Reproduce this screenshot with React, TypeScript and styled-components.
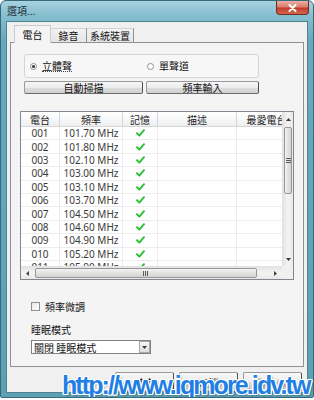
import React from 'react';
import styled, { createGlobalStyle } from 'styled-components';

const GlobalStyle = createGlobalStyle`
  html, body { margin: 0; padding: 0; background: #fff; }
  body { font-family: "Noto Sans", "Noto Sans CJK TC", sans-serif; }
`;

const cjk = `"Noto Sans CJK TC", "Noto Sans", sans-serif`;

const Window = styled.div`
  position: relative;
  width: 314px;
  height: 398px;
  box-sizing: border-box;
  display: flex;
  flex-direction: column;
  border: 1px solid #36697a;
  border-radius: 6px 6px 2px 2px;
  background: linear-gradient(180deg, #a7d2df 0px, #86bfd0 14px, #68a9bd 40px, #5d9fb3 100%);
  overflow: hidden;
`;

const TitleBar = styled.div`
  height: 20px;
  display: flex;
  align-items: flex-start;
  padding-left: 6px;
`;

const Title = styled.div`
  font-family: ${cjk};
  font-size: 10px;
  line-height: 19px;
  color: #1b2b33;
`;

const CloseButton = styled.div`
  margin-left: auto;
  margin-right: 4px;
  width: 33px;
  height: 14px;
  box-sizing: border-box;
  border: 1px solid #6e2b22;
  border-top: none;
  border-radius: 0 0 4px 4px;
  background: linear-gradient(180deg, #eab0a6 0%, #dc7d6e 45%, #c23d2b 55%, #d5664f 100%);
  display: flex;
  align-items: center;
  justify-content: center;
`;

const Client = styled.div`
  flex: 1;
  margin: 0 5px 4px;
  box-sizing: border-box;
  border: 1px solid #4f8394;
  background: #f0f0f0;
  padding: 3px 3px 0;
  display: flex;
  flex-direction: column;
  overflow: hidden;
`;

const TabStrip = styled.div`
  height: 17px;
  display: flex;
  align-items: flex-end;
  padding-left: 4px;
  position: relative;
  z-index: 1;
`;

const Tab = styled.div<{ $active?: boolean; $w: number }>`
  width: ${p => p.$w}px;
  height: ${p => (p.$active ? 18 : 14)}px;
  box-sizing: border-box;
  margin-bottom: ${p => (p.$active ? -1 : 0)}px;
  font-family: ${cjk};
  font-size: 10px;
  color: #111;
  display: flex;
  align-items: center;
  justify-content: center;
  background: ${p => (p.$active ? '#f4f4f4' : 'linear-gradient(180deg, #f2f2f2, #e6e6e6)')};
  border-left: 1px solid ${p => (p.$active ? '#c9cdd2' : '#8e9196')};
  border-right: 1px solid ${p => (p.$active ? '#c9cdd2' : '#8e9196')};
  border-top: 1px solid ${p => (p.$active ? '#c9cdd2' : '#d3d3d3')};
  & + & { border-left: none; }
`;

const TabPanel = styled.div`
  height: 326px;
  box-sizing: border-box;
  border: 1px solid #8e9196;
  background: #f4f4f4;
  padding: 11px 9px 0;
  display: flex;
  flex-direction: column;
`;

const GroupBox = styled.div`
  margin-left: 4px;
  width: 235px;
  height: 24px;
  box-sizing: border-box;
  border: 1px solid #d0d6da;
  border-radius: 3px;
  background: #f7f7f7;
  display: grid;
  grid-template-columns: 117px 1fr;
  align-items: center;
  padding-left: 5px;
`;

const RadioOption = styled.label`
  display: flex;
  align-items: center;
  gap: 5px;
  font-family: ${cjk};
  font-size: 10px;
  color: #111;
`;

const RadioCircle = styled.span<{ $checked?: boolean }>`
  width: 7px;
  height: 7px;
  box-sizing: border-box;
  border-radius: 50%;
  border: 1px solid #8f8f8f;
  background: #fff;
  display: flex;
  align-items: center;
  justify-content: center;
  &::after {
    content: '';
    width: 3px;
    height: 3px;
    border-radius: 50%;
    background: ${p => (p.$checked ? '#333' : 'transparent')};
  }
`;

const FocusText = styled.span<{ $focus?: boolean }>`
  border-bottom: 1px dotted ${p => (p.$focus ? '#444' : 'transparent')};
  line-height: 11px;
`;

const ButtonRow = styled.div`
  margin: 3px 0 0 4px;
  display: flex;
  gap: 3px;
`;

const PushButton = styled.div<{ $w: number; $h?: number; $disabled?: boolean }>`
  width: ${p => p.$w}px;
  height: ${p => p.$h ?? 13}px;
  box-sizing: border-box;
  border: 1px solid #9a9a9a;
  border-right-color: #4e4e4e;
  border-bottom-color: #6a6a6a;
  border-radius: 2px;
  background: linear-gradient(180deg, #f7f7f7 0%, #ececec 50%, #dddddd 51%, #d2d2d2 100%);
  font-family: ${cjk};
  font-size: 10px;
  color: ${p => (p.$disabled ? '#a0a0a0' : '#111')};
  display: flex;
  align-items: ${p => (p.$h ? 'flex-start' : 'center')};
  padding-top: ${p => (p.$h ? 2 : 0)}px;
  justify-content: center;
`;

const ListView = styled.div`
  margin-top: 17px;
  height: 169px;
  box-sizing: border-box;
  border: 1px solid #828790;
  background: #fff;
  display: grid;
  grid-template-columns: 1fr 11px;
  grid-template-rows: 1fr 13px;
`;

const ListBody = styled.div`
  overflow: hidden;
`;

const cols = [39, 63, 35, 79, 60];

const HeaderRow = styled.div`
  display: flex;
  height: 15px;
  box-sizing: border-box;
  border-bottom: 1px solid #d5d5d5;
  background: linear-gradient(180deg, #ffffff 0%, #f7f8f9 50%, #eceef0 100%);
`;

const HeaderCell = styled.div<{ $w: number }>`
  flex: 0 0 ${p => p.$w}px;
  box-sizing: border-box;
  border-right: 1px solid #d5d5d5;
  font-family: ${cjk};
  font-size: 10px;
  color: #222;
  display: flex;
  align-items: center;
  justify-content: center;
  white-space: nowrap;
  overflow: hidden;
`;

const Row = styled.div`
  display: flex;
  height: 13.4px;
  box-sizing: border-box;
  border-bottom: 1px solid #ececec;
`;

const Cell = styled.div<{ $w: number }>`
  flex: 0 0 ${p => p.$w}px;
  box-sizing: border-box;
  border-right: 1px solid #ececec;
  font-size: 10px;
  color: #3a3a3a;
  display: flex;
  align-items: center;
  justify-content: center;
  white-space: nowrap;
`;

const VScroll = styled.div`
  display: flex;
  flex-direction: column;
  background: linear-gradient(90deg, #e4e4e4, #f4f4f4 50%, #e8e8e8);
  border-left: 1px solid #e2e2e2;
`;

const HScroll = styled.div`
  display: flex;
  background: linear-gradient(180deg, #e4e4e4, #f4f4f4 50%, #e8e8e8);
  border-top: 1px solid #e2e2e2;
`;

const ArrowBox = styled.div<{ $v?: boolean }>`
  flex: 0 0 ${p => (p.$v ? 14 : 13)}px;
  display: flex;
  align-items: center;
  justify-content: center;
`;

const Thumb = styled.div<{ $v?: boolean; $len: number }>`
  ${p => (p.$v ? `height: ${p.$len}px; margin: 1px 1px 0;` : `width: ${p.$len}px; margin: 1px 0 1px 1px;`)}
  box-sizing: border-box;
  border: 1px solid #979797;
  border-radius: 2px;
  background: ${p =>
    p.$v
      ? 'linear-gradient(90deg, #f3f3f3, #e2e2e2 50%, #d4d4d4)'
      : 'linear-gradient(180deg, #f3f3f3, #e2e2e2 50%, #d4d4d4)'};
  display: flex;
  align-items: center;
  justify-content: center;
`;

const Spacer = styled.div`
  flex: 1;
`;

const Corner = styled.div`
  background: #f0f0f0;
`;

const CheckRow = styled.label`
  margin: 19px 0 0 11px;
  display: flex;
  align-items: center;
  gap: 5px;
  font-family: ${cjk};
  font-size: 10px;
  color: #111;
`;

const CheckBox = styled.span`
  width: 9px;
  height: 9px;
  box-sizing: border-box;
  border: 1px solid #8f8f8f;
  background: linear-gradient(135deg, #e8e8e8, #ffffff);
`;

const FieldLabel = styled.div`
  margin: 8px 0 0 11px;
  font-family: ${cjk};
  font-size: 10px;
  color: #111;
`;

const Select = styled.div`
  margin: 3px 0 0 11px;
  width: 120px;
  height: 14px;
  box-sizing: border-box;
  border: 1px solid #7e8287;
  background: #fff;
  display: flex;
  align-items: center;
  font-family: ${cjk};
  font-size: 10px;
  color: #111;
  padding-left: 2px;
`;

const DropButton = styled.div`
  margin-left: auto;
  width: 11px;
  height: 12px;
  box-sizing: border-box;
  border: 1px solid #a8a8a8;
  background: linear-gradient(180deg, #f5f5f5, #dedede);
  display: flex;
  align-items: center;
  justify-content: center;
`;

const DialogButtons = styled.div`
  margin-top: 5px;
  display: flex;
  justify-content: flex-end;
  gap: 5px;
  padding-right: 2px;
`;

const Watermark = styled.div`
  position: absolute;
  left: 61px;
  top: 370px;
  font-family: "Liberation Sans", Arial, sans-serif;
  font-weight: bold;
  font-size: 25px;
  letter-spacing: -1.9px;
  line-height: 28px;
  color: #1f7fe4;
  white-space: nowrap;
  text-shadow:
    1px 0 0 #fff, -1px 0 0 #fff, 0 1px 0 #fff, 0 -1px 0 #fff,
    1px 1px 0 #fff, -1px -1px 0 #fff, 1px -1px 0 #fff, -1px 1px 0 #fff,
    2px 2px 2px rgba(0, 0, 0, 0.25);
`;

const Check = () => (
  <svg width="9" height="8" viewBox="0 0 9 8">
    <path d="M1 4.2 L3.4 6.6 L8 1.2" fill="none" stroke="#2fc23a" strokeWidth="2" strokeLinecap="round" strokeLinejoin="round" />
  </svg>
);

const Tri = ({ dir }: { dir: 'up' | 'down' | 'left' | 'right' }) => {
  const pts = {
    up: '0,4 3.5,0 7,4',
    down: '0,0 3.5,4 7,0',
    left: '4,0 0,3.5 4,7',
    right: '0,0 4,3.5 0,7',
  }[dir];
  const v = dir === 'up' || dir === 'down';
  return (
    <svg width={v ? 5 : 3} height={v ? 3 : 5} viewBox={v ? '0 0 7 4' : '0 0 4 7'}>
      <polygon points={pts} fill="#3c3c3c" />
    </svg>
  );
};

const Grip = ({ v }: { v?: boolean }) => (
  <svg width={v ? 5 : 6} height={v ? 6 : 5} viewBox={v ? '0 0 5 6' : '0 0 6 5'}>
    {[0, 2, 4].map(i =>
      v ? (
        <rect key={i} x="0" y={i} width="5" height="1" fill="#5a5a5a" />
      ) : (
        <rect key={i} x={i} y="0" width="1" height="5" fill="#5a5a5a" />
      )
    )}
  </svg>
);

const stations = [
  ['001', '101.70 MHz'],
  ['002', '101.80 MHz'],
  ['003', '102.10 MHz'],
  ['004', '103.00 MHz'],
  ['005', '103.10 MHz'],
  ['006', '103.70 MHz'],
  ['007', '104.50 MHz'],
  ['008', '104.60 MHz'],
  ['009', '104.90 MHz'],
  ['010', '105.20 MHz'],
  ['011', '105.90 MHz'],
];

const headers = ['電台', '頻率', '記憶', '描述', '最愛電台'];

export default function App() {
  return (
    <>
      <GlobalStyle />
      <Window>
        <TitleBar>
          <Title>選項...</Title>
          <CloseButton>
            <svg width="9" height="8" viewBox="0 0 9 8">
              <path d="M1.5 1 L7.5 7 M7.5 1 L1.5 7" stroke="#fff" strokeWidth="2" strokeLinecap="round" />
            </svg>
          </CloseButton>
        </TitleBar>
        <Client>
          <TabStrip>
            <Tab $active $w={37}>電台</Tab>
            <Tab $w={36}>錄音</Tab>
            <Tab $w={47}>系統裝置</Tab>
          </TabStrip>
          <TabPanel>
            <GroupBox>
              <RadioOption>
                <RadioCircle $checked />
                <FocusText $focus>立體聲</FocusText>
              </RadioOption>
              <RadioOption>
                <RadioCircle />
                <FocusText>單聲道</FocusText>
              </RadioOption>
            </GroupBox>
            <ButtonRow>
              <PushButton $w={119}>自動掃描</PushButton>
              <PushButton $w={113}>頻率輸入</PushButton>
            </ButtonRow>
            <ListView>
              <ListBody>
                <HeaderRow>
                  {headers.map((h, i) => (
                    <HeaderCell key={h} $w={cols[i]}>{h}</HeaderCell>
                  ))}
                </HeaderRow>
                {stations.map(([no, freq]) => (
                  <Row key={no}>
                    <Cell $w={cols[0]}>{no}</Cell>
                    <Cell $w={cols[1]}>{freq}</Cell>
                    <Cell $w={cols[2]}><Check /></Cell>
                    <Cell $w={cols[3]} />
                    <Cell $w={cols[4]} />
                  </Row>
                ))}
              </ListBody>
              <VScroll>
                <ArrowBox $v><Tri dir="up" /></ArrowBox>
                <Thumb $v $len={67}><Grip v /></Thumb>
                <Spacer />
                <ArrowBox $v><Tri dir="down" /></ArrowBox>
              </VScroll>
              <HScroll>
                <ArrowBox><Tri dir="left" /></ArrowBox>
                <Thumb $len={222}><Grip /></Thumb>
                <Spacer />
                <ArrowBox><Tri dir="right" /></ArrowBox>
              </HScroll>
              <Corner />
            </ListView>
            <CheckRow>
              <CheckBox />
              <span>頻率微調</span>
            </CheckRow>
            <FieldLabel>睡眠模式</FieldLabel>
            <Select>
              <span>關閉 睡眠模式</span>
              <DropButton><Tri dir="down" /></DropButton>
            </Select>
          </TabPanel>
          <DialogButtons>
            <PushButton $w={59} $h={20}>確定</PushButton>
            <PushButton $w={59} $h={20}>取消</PushButton>
            <PushButton $w={59} $h={20} $disabled>套用(A)</PushButton>
          </DialogButtons>
        </Client>
        <Watermark>http://www.iqmore.idv.tw</Watermark>
      </Window>
    </>
  );
}
